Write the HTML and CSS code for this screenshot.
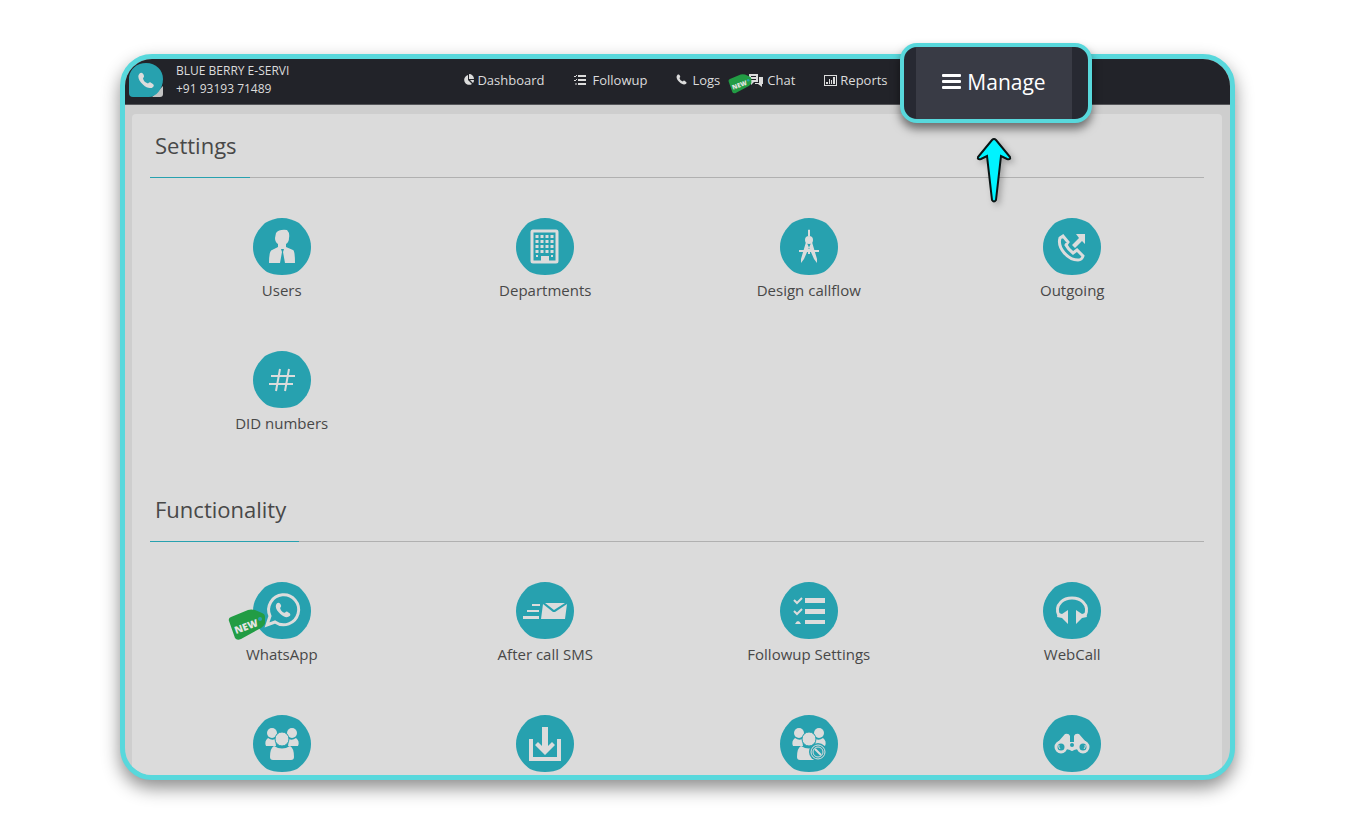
FILE: index.html
```
<!DOCTYPE html>
<html lang="en">
<head>
  <meta charset="UTF-8" />
  <meta name="viewport" content="width=device-width, initial-scale=1.0"/>
  <title>Manage</title>
  <link rel="stylesheet" href="styles.css">
</head>
<body>

<!-- shared shapes -->
<svg class="sprite" aria-hidden="true">
  <symbol id="disc" viewBox="0 0 58 57">
    <path d="M29 0C35 0 41 2 46 5C52 11 58 18 58 29C58 41 51 49 44 54C40 56 35 57 29 57C23 57 18 56 14 54C7 49 0 41 0 29C0 18 6 11 12 5C17 2 23 0 29 0Z"/>
  </symbol>
  <symbol id="phone" viewBox="0 0 24 24">
    <path d="M3 2C5 0 8 1 9 5C10 8 7 8 8 10C9 13 11 15 14 16C16 17 16 13 19 15C23 17 24 19 22 21C19 24 13 23 8 18C2 13-1 6 3 2Z"/>
  </symbol>
  <symbol id="group" viewBox="0 0 58 57">
    <circle cx="19" cy="18" r="5"/>
    <circle cx="39" cy="18" r="5"/>
    <path d="M15 23Q19 26 22 24L23 31H13Q11 26 15 23ZM43 23Q39 26 36 24L35 31H45Q47 26 43 23Z"/>
    <path d="M21 31Q29 36 37 31Q41 33 41 42Q41 45 38 45H20Q17 45 17 42Q17 33 21 31Z"/>
    <circle cx="29" cy="24" r="7" class="cut"/>
  </symbol>
</svg>

<main class="stage">
  <div class="frame">
    <header class="topbar">
      <div class="account">
        <svg class="logo" viewBox="0 0 34 34" aria-hidden="true">
          <path d="M23 34L34 23V31Q34 34 31 34Z" fill="#c3c3c3"/>
          <path d="M17 0C27 0 34 7 34 16C34 26 27 34 20 34H4Q0 34 0 30V14C1 6 8 0 17 0Z" fill="#27a1af"/>
          <use href="#phone" x="8" y="9" width="18" height="17" fill="#dcdcdc"/>
        </svg>
        <div class="account-text">
          <div>BLUE BERRY E-SERVI</div>
          <div>+91 93193 71489</div>
        </div>
      </div>

      <nav class="nav">
        <a href="#dashboard">
          <svg width="11" height="12" viewBox="0 0 11 12"><path d="M5 1V6L9 10A5 5 0 1 1 5 1ZM6 0A5 5 0 0 1 11 5H6ZM7 6H11Q11 8 10 9Z"/></svg>
          Dashboard
        </a>
        <a href="#followup">
          <svg width="16" height="12" viewBox="0 0 16 12"><path d="M4 1H12V3H4ZM4 5H12V7H4ZM4 9H12V11H4Z"/><path d="M0 2L1 3L3 1M0 6L1 7L3 5M1 10H3" class="line"/></svg>
          Followup
        </a>
        <a href="#logs">
          <svg width="13" height="12" viewBox="0 0 13 12"><use href="#phone" width="11" height="11"/></svg>
          Logs
        </a>
        <a href="#chat">
          <svg class="nav-tag" width="24" height="22" viewBox="0 0 38 34">
            <path d="M1 13Q0 10 3 9L20 2Q23 1 27 2L34 5Q37 6 37 9L37 15Q37 17 33 20L13 31Q9 33 7 30Z" class="tag-body"/>
            <circle cx="32" cy="11" r="2" class="tag-hole"/>
            <text x="8" y="26" transform="rotate(-20 8 26)" class="tag-text">NEW</text>
          </svg>
          <svg width="15" height="13" viewBox="0 0 15 13"><path d="M0 0H9V8H5L2 11V8H0ZM2 2V3H7V2ZM2 5V6H7V5ZM10 3H14V10H13V13L9 10H6V9H10Z" fill-rule="evenodd"/></svg>
          Chat
        </a>
        <a href="#reports">
          <svg width="13" height="12" viewBox="0 0 13 12"><path d="M0 1H13V12H0ZM1 2V11H12V2Z" fill-rule="evenodd"/><path d="M2 8H4V10H2ZM5 5H6V10H5ZM7 6H8V10H7ZM9 3H11V10H9Z"/></svg>
          Reports
        </a>
      </nav>
    </header>

    <div class="content">
      <div class="panel">
        <section>
          <h2><span>Settings</span></h2>
          <div class="tiles">
            <a href="#users" class="tile">
              <svg viewBox="0 0 58 57"><use href="#disc" class="disc"/>
                <path d="M23 15Q26 11 34 12Q37 15 36 20Q36 24 33 26V29L40 32Q42 33 42 45H16Q16 33 19 32L25 29V26Q22 24 22 20Z"/>
                <path d="M28 31H31L30 34L32 45H27L29 34Z" class="teal"/>
              </svg>
              Users
            </a>
            <a href="#departments" class="tile">
              <svg viewBox="0 0 58 57"><use href="#disc" class="disc"/>
                <rect x="16" y="13" width="25" height="31" rx="1" class="line w3"/>
                <path d="M21 17V35M26 17V35M31 17V35M36 17V35" class="line dots"/>
                <path d="M20 37H22V39H20ZM35 37H37V39H35ZM25 38H33V44H25Z"/>
              </svg>
              Departments
            </a>
            <a href="#callflow" class="tile">
              <svg viewBox="0 0 58 57"><use href="#disc" class="disc"/>
                <path d="M28 12Q29 11 30 12V18H28ZM26 24L31 25L24 41L21 45V41ZM32 24L27 25L34 41L37 45V41Z"/>
                <circle cx="29" cy="22" r="4"/>
                <path d="M19 33H39M29 31V36" class="line w2"/>
              </svg>
              Design callflow
            </a>
            <a href="#outgoing" class="tile">
              <svg viewBox="0 0 58 57"><use href="#disc" class="disc"/>
                <path d="M17 20L20 18L25 24L23 27Q25 31 30 35L34 32L40 38Q39 42 35 42C25 42 14 30 17 20Z" class="line w3"/>
                <path d="M33 16H42V26L39 23L32 30L29 27L36 20Z"/>
              </svg>
              Outgoing
            </a>
            <a href="#did" class="tile">
              <svg viewBox="0 0 58 57"><use href="#disc" class="disc"/>
                <path d="M27 18L23 40M36 18L32 40M18 25H42M16 33H40" class="line w2"/>
              </svg>
              DID numbers
            </a>
          </div>
        </section>

        <section>
          <h2><span>Functionality</span></h2>
          <div class="tiles">
            <a href="#whatsapp" class="tile">
              <span class="tagged">
                <svg viewBox="0 0 58 57"><use href="#disc" class="disc"/>
                  <path d="M17 34A15 15 0 1 1 22 40L14 43Z" class="line w3"/>
                  <use href="#phone" x="22" y="20" width="16" height="16"/>
                </svg>
                <svg class="tile-tag" viewBox="0 0 38 34">
                  <path d="M1 13Q0 10 3 9L20 2Q23 1 27 2L34 5Q37 6 37 9L37 15Q37 17 33 20L13 31Q9 33 7 30Z" class="tag-body"/>
                  <circle cx="32" cy="11" r="2" class="tag-hole"/>
                  <text x="8" y="26" transform="rotate(-20 8 26)" class="tag-text">NEW</text>
                </svg>
              </span>
              WhatsApp
            </a>
            <a href="#sms" class="tile">
              <svg viewBox="0 0 58 57"><use href="#disc" class="disc"/>
                <path d="M29 21H49L38 28ZM27 22L37 30H39L51 22L49 37H25Z"/>
                <path d="M16 22H24V24H16ZM11 28H23V30H11ZM7 34H23V37H7Z"/>
              </svg>
              After call SMS
            </a>
            <a href="#followup-settings" class="tile">
              <svg viewBox="0 0 58 57"><use href="#disc" class="disc"/>
                <path d="M25 16H45V21H25ZM25 27H45V32H25ZM25 38H45V42H25ZM15 42Q18 36 21 42Z"/>
                <path d="M14 18L17 21L22 16M14 29L17 32L22 27" class="line w2"/>
              </svg>
              Followup Settings
            </a>
            <a href="#webcall" class="tile">
              <svg viewBox="0 0 58 57"><use href="#disc" class="disc"/>
                <path d="M16 34Q12 26 18 20Q22 16 29 16Q36 16 40 20Q46 26 42 34" class="line w3"/>
                <path d="M25 28V42L19 36L14 35L16 31L19 32ZM33 28V42L39 36L44 35L42 31L39 32Z"/>
              </svg>
              WebCall
            </a>
            <a href="#contacts" class="tile" aria-label="Contacts">
              <svg viewBox="0 0 58 57"><use href="#disc" class="disc"/><use href="#group"/></svg>
            </a>
            <a href="#download" class="tile" aria-label="Download">
              <svg viewBox="0 0 58 57"><use href="#disc" class="disc"/>
                <path d="M15 24V44H43V24" class="line w4"/>
                <path d="M26 12H32V31L36 27L39 30L29 40L19 30L22 27L26 31Z"/>
              </svg>
            </a>
            <a href="#blocked" class="tile" aria-label="Blocked contacts">
              <svg viewBox="0 0 58 57"><use href="#disc" class="disc"/><use href="#group"/>
                <circle cx="38" cy="37" r="9" class="teal"/>
                <circle cx="38" cy="37" r="7" class="line"/>
                <circle cx="38" cy="37" r="5" class="line"/>
                <path d="M35 34L41 40" class="line w2"/>
              </svg>
            </a>
            <a href="#search" class="tile" aria-label="Search">
              <svg viewBox="0 0 58 57"><use href="#disc" class="disc"/>
                <path d="M15 27L22 19Q26 18 27 21V27H31V21Q32 18 36 19L43 27V34H35L31 35Q29 37 27 35L23 34H15Z"/>
                <circle cx="18" cy="32" r="5" class="lens"/>
                <circle cx="40" cy="32" r="5" class="lens"/>
                <path d="M16 30Q15 32 17 34M42 30Q43 32 41 34" class="line"/>
                <circle cx="29" cy="30" r="2" class="teal"/>
              </svg>
            </a>
          </div>
        </section>
      </div>
    </div>
  </div>

  <!-- highlighted menu entry -->
  <div class="callout">
    <div class="callout-box">
      <button type="button">
        <svg width="19" height="16" viewBox="0 0 19 16"><path d="M1 0H18Q19 0 19 1V2Q19 3 18 3H1Q0 3 0 2V1Q0 0 1 0ZM1 6H18Q19 6 19 7V8Q19 9 18 9H1Q0 9 0 8V7Q0 6 1 6ZM1 12H18Q19 12 19 13V14Q19 15 18 15H1Q0 15 0 14V13Q0 12 1 12Z"/></svg>
        Manage
      </button>
    </div>
    <svg class="pointer" width="36" height="66" viewBox="0 0 36 66" aria-hidden="true">
      <path d="M16 2Q18 0 20 2L34 19Q35 22 31 21L25 18L20 62Q18 65 16 62L11 18L5 21Q1 22 2 19Z"/>
    </svg>
  </div>
</main>

</body>
</html>
```

FILE: styles.css
```
* { box-sizing: border-box; }

body {
  margin: 0;
  padding: 54px 121px 55px 120px;
  background: #fff;
  font-family: 'Open Sans', 'Noto Sans', sans-serif;
  color: #484848;
}

a {
  color: inherit;
  text-decoration: none;
}

.sprite {
  position: absolute;
  width: 0;
  height: 0;
}

.stage {
  position: relative;
}

.frame {
  height: calc(100vh - 109px);
  overflow: hidden;
  border: 5px solid #58d8dc;
  border-radius: 32px;
  background: #cecece;
  box-shadow: 0 8px 18px rgba(0,0,0,0.45);
}

.topbar {
  display: grid;
  grid-template-columns: 1fr auto 1fr;
  align-items: center;
  height: 46px;
  padding: 0 4px 3px;
  background: #222329;
  border-bottom: 1px solid #55565a;
  color: #dcdcdc;
}

.account {
  display: flex;
  align-items: center;
  gap: 13px;
  font-size: 12px;
  line-height: 18px;
}

.logo {
  width: 34px;
  height: 34px;
}

.nav {
  display: flex;
  gap: 29px;
  margin-right: 4px;
  font-size: 13px;
}

.nav a {
  position: relative;
  display: flex;
  align-items: center;
  gap: 3px;
}

.nav svg {
  fill: #dcdcdc;
}

.nav-tag {
  position: absolute;
  left: -21px;
  top: 2px;
}

.nav .tag-body,
.tile .tag-body {
  fill: #229c44;
}

.tag-text {
  font-size: 10px;
  font-weight: 800;
  fill: #e4e4e4;
}

.tag-hole {
  fill: #27a1af;
}

.line {
  fill: none;
  stroke: #dcdcdc;
  stroke-width: 1;
}

.w2 { stroke-width: 2; }
.w3 { stroke-width: 3; }
.w4 { stroke-width: 4; }

.dots {
  stroke-width: 3;
  stroke-dasharray: 3 2;
}

.content {
  padding: 9px 8px 0 7px;
}

.panel {
  padding: 12px 18px 0;
  border-radius: 4px;
  background: #dbdbdb;
}

h2 {
  margin: 0;
  border-bottom: 1px solid #b0b0b0;
  font-size: 22px;
  font-weight: 400;
  line-height: 38px;
}

h2 span {
  display: inline-block;
  height: 52px;
  margin-bottom: -1px;
  padding: 0 13px 0 5px;
  border-bottom: 1px solid #27a1af;
  vertical-align: top;
}

.tiles {
  display: grid;
  grid-template-columns: repeat(4, 1fr);
  grid-auto-rows: 133px;
  padding-top: 40px;
  margin-bottom: 6px;
}

.tile {
  display: flex;
  flex-direction: column;
  align-items: center;
  gap: 5px;
  font-size: 15px;
  line-height: 20px;
}

.tile svg {
  width: 58px;
  height: 57px;
  fill: #dcdcdc;
}

.tile .disc,
.tile .teal {
  fill: #27a1af;
}

.cut {
  stroke: #27a1af;
  stroke-width: 1;
}

.lens {
  fill: #27a1af;
  stroke: #dcdcdc;
  stroke-width: 3;
}

.tagged {
  position: relative;
  height: 57px;
}

.tile .tile-tag {
  position: absolute;
  left: -25px;
  top: 26px;
  width: 38px;
  height: 34px;
}

.callout {
  position: absolute;
  top: -11px;
  right: 143px;
  display: flex;
  flex-direction: column;
  align-items: center;
  gap: 15px;
}

.callout-box {
  padding: 0 16px 0 12px;
  border: 4px solid #58d8dc;
  border-radius: 17px;
  background: #272932;
  box-shadow: 0 6px 10px rgba(0,0,0,0.5);
}

.callout button {
  display: flex;
  align-items: center;
  justify-content: center;
  gap: 6px;
  width: 156px;
  height: 72px;
  padding: 0 0 3px;
  border: none;
  background: #393b45;
  color: #fff;
  font-family: inherit;
  font-size: 21px;
  cursor: pointer;
}

.callout button svg {
  fill: #fff;
}

.pointer {
  margin-right: 5px;
  fill: #00f3ff;
  stroke: #0a1414;
  stroke-width: 2;
  filter: drop-shadow(3px 3px 3px rgba(0,0,0,0.25));
}
```
